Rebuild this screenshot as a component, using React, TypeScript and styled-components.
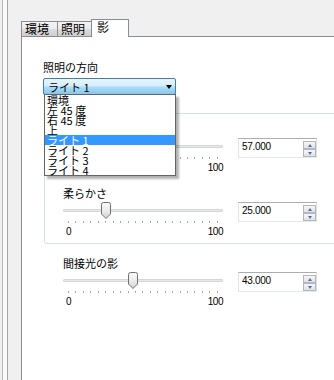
import React, {useId} from 'react';
import styled, {createGlobalStyle} from 'styled-components';

const GlobalStyle = createGlobalStyle`
  html, body {
    margin: 0;
    padding: 0;
    width: 334px;
    height: 380px;
    overflow: hidden;
    background: #f0f0f0;
  }
  body {
    font-family: "Noto Sans CJK JP", "Noto Sans", sans-serif;
    font-size: 11px;
    color: #000;
  }
`;

const directions = ['環境', '左 45 度', '右 45 度', '上', 'ライト 1', 'ライト 2', 'ライト 3', 'ライト 4'];

// the first slider sits under the open dropdown, so its label and "0" are not drawn
const sliders = [
  {label: '', value: 57, covered: true},
  {label: '柔らかさ', value: 25, covered: false},
];

const Root = styled.div`
  display: flex;
  height: 380px;
`;

const SideStrip = styled.div`
  margin-left: 2px;
  width: 4px;
  border-left: 1px solid #b9b9b9;
  border-right: 1px solid #a5a5a5;
  background: #fbfbfb;
`;

const Main = styled.div`
  flex: 1;
  display: flex;
  flex-direction: column;
  padding: 19px 0 0 13px;
  min-width: 0;
  overflow: hidden;
`;

const TabRow = styled.div`
  display: flex;
  align-items: flex-end;
  height: 17px;
  position: relative;
  z-index: 1;
`;

const Tab = styled.div<{ $width: number; $active?: boolean }>`
  box-sizing: border-box;
  width: ${p => p.$width}px;
  height: ${p => (p.$active ? 18 : 15)}px;
  margin-bottom: ${p => (p.$active ? -1 : 0)}px;
  border: 1px solid #898c95;
  border-bottom: none;
  background: ${p => (p.$active ? '#fff' : 'linear-gradient(#f3f3f3, #ebebeb 50%, #dddddd 50%, #cfcfcf)')};
  padding-left: ${p => (p.$active ? 5 : 3)}px;
  font-size: 12px;
  line-height: ${p => (p.$active ? 14 : 14)}px;
  & + & {
    margin-left: -1px;
  }
`;

const Panel = styled.div`
  flex: 1;
  background: #fff;
  border-top: 1px solid #898c95;
  border-left: 1px solid #898c95;
  padding: 24px 0 0 21px;
`;

const FieldLabel = styled.div`
  height: 12px;
  line-height: 12px;
  white-space: nowrap;
`;

const SelectWrap = styled.div`
  position: relative;
  width: 133px;
  margin-top: 5px;
`;

const SelectBox = styled.div`
  box-sizing: border-box;
  height: 17px;
  border: 1px solid #3c7fb1;
  border-radius: 2px;
  background: linear-gradient(#e9f5fc, #d4edfa 45%, #abdcf6 55%, #88c7ec);
  display: flex;
  align-items: center;
  justify-content: space-between;
  padding: 0 3px 0 4px;
  line-height: 14px;
`;

const Arrow = styled.span`
  width: 0;
  height: 0;
  border-left: 3.5px solid transparent;
  border-right: 3.5px solid transparent;
  border-top: 4px solid #000;
`;

const DropList = styled.ul`
  position: absolute;
  top: 16px;
  left: 1px;
  width: 132px;
  box-sizing: border-box;
  margin: 0;
  padding: 0;
  list-style: none;
  background: #fff;
  border: 1px solid #646464;
  box-shadow: 3px 3px 2px rgba(0, 0, 0, 0.3);
  z-index: 5;
`;

const DropItem = styled.li<{ $selected?: boolean }>`
  height: 10px;
  line-height: 10px;
  padding-left: 2px;
  white-space: pre;
  background: ${p => (p.$selected ? '#3399ff' : 'transparent')};
  color: ${p => (p.$selected ? '#fff' : '#000')};
`;

const GroupBox = styled.div`
  margin: 18px 0 0 1px;
  width: 330px;
  border: 1px solid #d5dfe5;
  border-radius: 3px;
  padding: 9px 0 6px 18px;
  display: flex;
  flex-direction: column;
  gap: 14px;
`;

const Row = styled.div<{ $outside?: boolean }>`
  display: grid;
  grid-template-columns: 160px 79px;
  grid-template-rows: 12px auto;
  column-gap: 15px;
  row-gap: 3px;
  margin: ${p => (p.$outside ? '13px 0 0 20px' : '0')};
`;

const RowLabel = styled(FieldLabel)`
  grid-column: 1 / -1;
`;

const SliderArea = styled.div`
  position: relative;
  height: 35px;
`;

const Track = styled.div`
  margin-top: 7px;
  height: 3px;
  box-sizing: border-box;
  border: 1px solid #d6d6d6;
  border-radius: 1px;
  background: #e7eaea;
`;

const Ticks = styled.div`
  margin: 9px 5px 0;
  height: 2px;
  display: flex;
  justify-content: space-between;
`;

const Tick = styled.span`
  width: 1px;
  height: 2px;
  background: #a6a6a6;
`;

const Scale = styled.div`
  margin-top: 4px;
  padding-left: 3px;
  display: flex;
  justify-content: space-between;
  font-family: "Liberation Sans", Arial, sans-serif;
  font-size: 10px;
  line-height: 10px;
  letter-spacing: -0.5px;
`;

const Thumb = styled.svg`
  position: absolute;
  top: 0;
`;

const SpinBox = styled.div`
  box-sizing: border-box;
  height: 20px;
  border: 1px solid;
  border-color: #abadb3 #dbdfe6 #e3e9ef #e2e3ea;
  background: #fff;
  display: flex;
  justify-content: space-between;
`;

const SpinValue = styled.span`
  padding: 3px 0 0 3px;
  font-family: "Liberation Sans", Arial, sans-serif;
  font-size: 10px;
  line-height: 10px;
  letter-spacing: -0.3px;
`;

const SpinButtons = styled.div`
  display: flex;
  flex-direction: column;
  margin: 2px 0 0 0;
`;

const SpinBtn = styled.div<{ $down?: boolean }>`
  box-sizing: border-box;
  width: 13px;
  height: 8px;
  border: 1px solid #b4b8be;
  background: linear-gradient(#f6f6f6, #e1e1e1);
  display: flex;
  align-items: center;
  justify-content: center;
  &::after {
    content: '';
    width: 0;
    height: 0;
    border-left: 2.5px solid transparent;
    border-right: 2.5px solid transparent;
    ${p => (p.$down ? 'border-top: 3px solid #4a6fb5;' : 'border-bottom: 3px solid #4a6fb5;')}
  }
`;

const SliderThumb = ({value}: { value: number }) => {
  const id = useId();
  const left = 1.5 * value;
  return (
    <Thumb width="10" height="17" viewBox="0 0 10 17" style={{left}}>
      <defs>
        <linearGradient id={id} x1="0" y1="0" x2="0" y2="1">
          <stop offset="0" stopColor="#fbfbfb"/>
          <stop offset="0.5" stopColor="#ececec"/>
          <stop offset="1" stopColor="#d2d2d2"/>
        </linearGradient>
      </defs>
      <path d="M0.5 2.5 Q0.5 0.5 2.5 0.5 H7.5 Q9.5 0.5 9.5 2.5 V12 L5 16.5 L0.5 12 Z"
            fill={`url(#${id})`} stroke="#707070"/>
    </Thumb>
  );
};

const Slider = ({label, value, outside, covered}: {
  label: string; value: number; outside?: boolean; covered?: boolean
}) => (
  <Row $outside={outside}>
    <RowLabel>{label}</RowLabel>
    <SliderArea>
      <Track/>
      <Ticks>
        {Array.from({length: 21}, (_, i) => <Tick key={i}/>)}
      </Ticks>
      <Scale>
        <span>{covered ? '' : '0'}</span>
        <span>100</span>
      </Scale>
      <SliderThumb value={value}/>
    </SliderArea>
    <SpinBox>
      <SpinValue>{value.toFixed(3)}</SpinValue>
      <SpinButtons>
        <SpinBtn/>
        <SpinBtn $down/>
      </SpinButtons>
    </SpinBox>
  </Row>
);

export default function App() {
  return (
    <Root>
      <GlobalStyle/>
      <SideStrip/>
      <Main>
        <TabRow>
          <Tab $width={37}>環境</Tab>
          <Tab $width={35}>照明</Tab>
          <Tab $width={38} $active>影</Tab>
        </TabRow>
        <Panel>
          <FieldLabel>照明の方向</FieldLabel>
          <SelectWrap>
            <SelectBox>
              <span>ライト 1</span>
              <Arrow/>
            </SelectBox>
            <DropList>
              {directions.map(d => (
                <DropItem key={d} $selected={d === 'ライト 1'}>{d}</DropItem>
              ))}
            </DropList>
          </SelectWrap>
          <GroupBox>
            {sliders.map((s, i) => (
              <Slider key={i} label={s.label} value={s.value} covered={s.covered}/>
            ))}
          </GroupBox>
          <Slider label="間接光の影" value={43} outside/>
        </Panel>
      </Main>
    </Root>
  );
}
